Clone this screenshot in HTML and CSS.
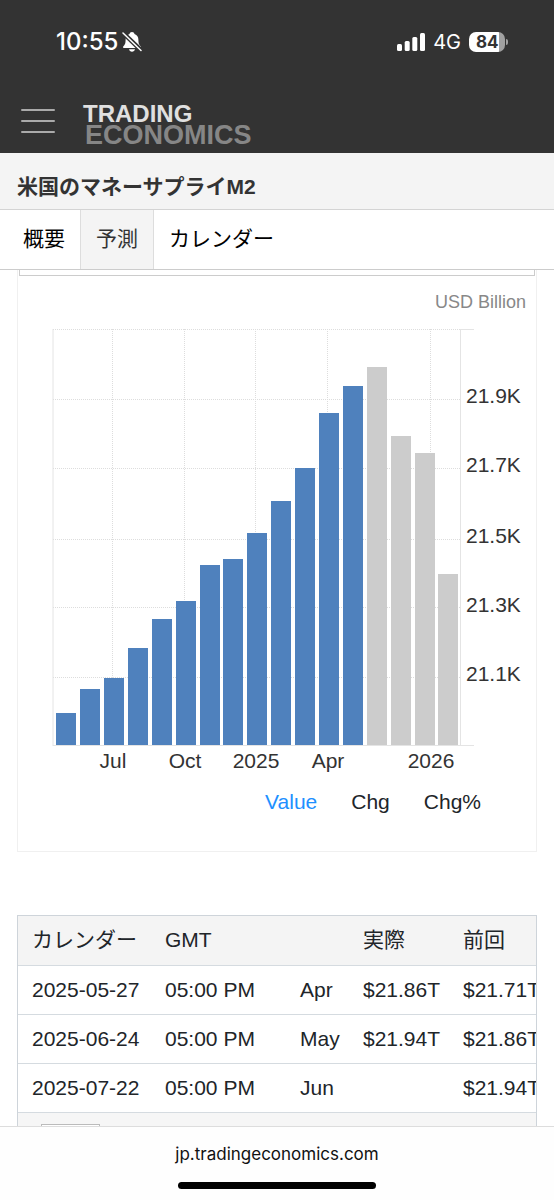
FILE: index.html
```html
<!DOCTYPE html>
<html lang="ja">

<head>
    <meta charset="UTF-8">
    <meta name="viewport" content="width=device-width, initial-scale=1.0">
    <title>米国のマネーサプライM2</title>
    <link rel="stylesheet" href="styles.css">
</head>

<body>
    <header>
        <div class="status">
            <div class="clock">
                <span class="time">10:55</span>
                <svg class="bell" width="20" height="22" viewBox="0 0 20 22">
                    <path fill="#fff" d="M10 1c1.400 0 2.200.8 2.500 2 2.700.9 3.900 3 3.900 5.700 0 4 .8 5 2.200 6.500.7.8.3 1.800-.8 1.800H2.200c-1.100 0-1.500-1-.8-1.800C2.800 13.700 3.600 12.700 3.600 8.700 3.600 6 4.800 3.900 7.500 3 7.800 1.800 8.600 1 10 1zM7 18.300h6c-.3 1.500-1.500 2.500-3 2.500s-2.700-1-3-2.500z" />
                    <path stroke="#333" stroke-width="4.500" d="M0 1l20 19" />
                    <path stroke="#fff" stroke-width="1.500" stroke-linecap="round" d="M1 2l18 17.500" />
                </svg>
            </div>
            <div class="phone">
                <svg width="28" height="20" viewBox="0 0 28 20" fill="#fff">
                    <rect x="0" y="12" width="5" height="7" rx="1.500" />
                    <rect x="7.700" y="9" width="5" height="10" rx="1.500" />
                    <rect x="15.300" y="5" width="5" height="14" rx="1.500" />
                    <rect x="23" y="1" width="5" height="18" rx="1.500" />
                </svg>
                <span class="network">4G</span>
                <div class="battery"><span>84</span></div>
            </div>
        </div>
        <div class="brand">
            <button class="menu" aria-label="Menu"><i></i><i></i><i></i></button>
            <a href="#" class="logo">
                <span class="trading">TRADING</span>
                <span class="economics">ECONOMICS</span>
            </a>
        </div>
    </header>

    <h1>米国のマネーサプライM2</h1>
    <nav>
        <a href="#">概要</a>
        <a href="#" class="active">予測</a>
        <a href="#">カレンダー</a>
    </nav>

    <main>
        <section class="card">
            <div class="toolbar"></div>
            <svg class="chart" viewBox="0 0 518 508">
                <text class="unit" x="508" y="32" text-anchor="end">USD Billion</text>
                <g class="grid">
                    <path d="M35 53.500H442M35 123.500H442M35 192.500H442M35 263.500H442M35 331.500H442M35 401.500H442" />
                    <path d="M94.500 53V469M166.500 53V469M237.500 53V469M309.500 53V469M412.500 53V469" />
                </g>
                <path class="axis" d="M35 53V470M442.500 53V470M35 469.500H456M442 53.500H456" />
                <g class="actual">
                    <rect x="38" y="437" width="20" height="32" />
                    <rect x="62" y="413" width="20" height="56" />
                    <rect x="86" y="402" width="20" height="67" />
                    <rect x="110" y="372" width="20" height="97" />
                    <rect x="134" y="343" width="20" height="126" />
                    <rect x="158" y="325" width="20" height="144" />
                    <rect x="182" y="289" width="20" height="180" />
                    <rect x="205" y="283" width="20" height="186" />
                    <rect x="229" y="257" width="20" height="212" />
                    <rect x="253" y="225" width="20" height="244" />
                    <rect x="277" y="192" width="20" height="277" />
                    <rect x="301" y="137" width="20" height="332" />
                    <rect x="325" y="110" width="20" height="359" />
                </g>
                <g class="forecast">
                    <rect x="349" y="91" width="20" height="378" />
                    <rect x="373" y="160" width="20" height="309" />
                    <rect x="397" y="177" width="20" height="292" />
                    <rect x="420" y="298" width="20" height="171" />
                </g>
                <g class="values">
                    <text x="448" y="127">21.9K</text>
                    <text x="448" y="196">21.7K</text>
                    <text x="448" y="267">21.5K</text>
                    <text x="448" y="336">21.3K</text>
                    <text x="448" y="405">21.1K</text>
                </g>
                <g class="months" text-anchor="middle">
                    <text x="95" y="492">Jul</text>
                    <text x="167" y="492">Oct</text>
                    <text x="238" y="492">2025</text>
                    <text x="310" y="492">Apr</text>
                    <text x="413" y="492">2026</text>
                </g>
            </svg>
            <div class="modes">
                <button class="selected">Value</button>
                <button>Chg</button>
                <button>Chg%</button>
            </div>
        </section>

        <section class="calendar">
            <table>
                <colgroup>
                    <col class="date">
                    <col class="hour">
                    <col class="month">
                    <col class="money">
                    <col class="money">
                </colgroup>
                <thead>
                    <tr>
                        <th>カレンダー</th>
                        <th>GMT</th>
                        <th></th>
                        <th>実際</th>
                        <th>前回</th>
                    </tr>
                </thead>
                <tbody>
                    <tr>
                        <td>2025-05-27</td>
                        <td>05:00 PM</td>
                        <td>Apr</td>
                        <td>$21.86T</td>
                        <td>$21.71T</td>
                    </tr>
                    <tr>
                        <td>2025-06-24</td>
                        <td>05:00 PM</td>
                        <td>May</td>
                        <td>$21.94T</td>
                        <td>$21.86T</td>
                    </tr>
                    <tr>
                        <td>2025-07-22</td>
                        <td>05:00 PM</td>
                        <td>Jun</td>
                        <td></td>
                        <td>$21.94T</td>
                    </tr>
                </tbody>
            </table>
            <div class="more">
                <div class="box"></div>
            </div>
        </section>
    </main>

    <footer>
        <span>jp.tradingeconomics.com</span>
        <div class="home"></div>
    </footer>
</body>

</html>
```
FILE: styles.css
```css
* {
    margin: 0;
    padding: 0;
    box-sizing: border-box;
}

body {
    display: flex;
    flex-direction: column;
    height: 100vh;
    background-color: white;
    color: #212529;
    font-family: "Liberation Sans", "Noto Sans CJK JP", sans-serif;
    font-size: 21px;
}

button {
    border: none;
    background: none;
    font: inherit;
    color: inherit;
}

a {
    text-decoration: none;
    color: inherit;
}

header {
    height: 153px;
    background-color: #333;
    color: white;
    flex-shrink: 0;
}

.status {
    display: flex;
    justify-content: space-between;
    align-items: center;
    height: 83px;
    padding: 0 46px 0 56px;
    font-family: Inter, sans-serif;
}

.clock,
.phone {
    display: flex;
    align-items: center;
}

.clock {
    gap: 4px;
}

.phone {
    gap: 8px;
}

.time {
    font-size: 24px;
    font-weight: 500;
}

.network {
    font-size: 20px;
}

.battery {
    position: relative;
    width: 36px;
    height: 20px;
    border-radius: 7px;
    background: linear-gradient(to right, white 84%, #a0a0a0 84%);
    color: #333;
    font-size: 17px;
    font-weight: 700;
    line-height: 20px;
    padding-left: 7px;
    margin-right: 3px;
}

.battery::after {
    content: "";
    position: absolute;
    right: -3px;
    top: 7px;
    width: 2px;
    height: 6px;
    border-radius: 0 3px 3px 0;
    background-color: #a0a0a0;
}

.brand {
    display: flex;
    align-items: center;
    gap: 28px;
    height: 70px;
    padding: 10px 21px 0;
}

.menu {
    display: flex;
    flex-direction: column;
    gap: 9px;
    width: 34px;
    height: 32px;
    padding-top: 2px;
}

.menu i {
    width: 100%;
    height: 2px;
    flex-shrink: 0;
    border-radius: 1px;
    background-color: #aaa;
}

.logo {
    display: flex;
    flex-direction: column;
    padding-top: 3px;
    font-weight: bold;
}

.trading {
    color: #e0e0e0;
    font-size: 24px;
    line-height: 20px;
}

.economics {
    color: #868686;
    font-size: 27px;
    line-height: 22px;
    padding-left: 2px;
}

h1 {
    height: 57px;
    padding: 12px 17px 0;
    background-color: #f4f4f4;
    border-bottom: 1px solid #d4d4d4;
    color: #333;
    font-size: 21px;
    line-height: 44px;
    flex-shrink: 0;
}

nav {
    display: flex;
    height: 60px;
    padding-left: 8px;
    border-bottom: 1px solid #ccc;
    color: black;
    line-height: 58px;
    flex-shrink: 0;
}

nav a {
    padding: 0 15px;
}

nav .active {
    background-color: #f4f4f4;
    border: solid #ddd;
    border-width: 0 1px;
    color: #333;
}

main {
    flex: 1;
    min-height: 0;
    overflow: hidden;
    padding: 0 17px;
}

.card {
    border: 1px solid #f0f0f0;
    border-top: none;
    padding-bottom: 37px;
    margin-bottom: 63px;
}

.toolbar {
    height: 6px;
    margin: 0 1px;
    border: 1px solid #ccc;
    border-top: none;
}

.chart {
    display: block;
    width: 100%;
}

.chart text {
    fill: #333;
    font-size: 21px;
}

.chart .unit {
    fill: #888;
    font-size: 18px;
}

.grid path {
    fill: none;
    stroke: #ddd;
    stroke-dasharray: 1 1;
}

.axis {
    fill: none;
    stroke: #e4e4e4;
}

.actual {
    fill: #4f81bd;
}

.forecast {
    fill: #ccc;
}

.modes {
    display: flex;
    justify-content: flex-end;
    gap: 34px;
    padding: 6px 55px 0 0;
    line-height: 24px;
}

.modes .selected {
    color: #1e90ff;
}

.calendar {
    border: 1px solid #ced4da;
    overflow: hidden;
}

table {
    width: 100%;
    min-width: 531px;
    table-layout: fixed;
    border-collapse: collapse;
}

.date {
    width: 133px;
}

.hour {
    width: 135px;
}

.month {
    width: 63px;
}

.money {
    width: 100px;
}

th,
td {
    height: 49px;
    padding-left: 14px;
    border-bottom: 1px solid #d5dbe0;
    text-align: left;
    font-weight: normal;
    line-height: 32px;
    white-space: nowrap;
}

thead {
    background-color: #f4f4f4;
}

.more {
    height: 60px;
    padding: 11px 23px;
    background-color: #f6f6f6;
}

.box {
    width: 59px;
    height: 36px;
    border: 1px solid #bbb;
    background-color: white;
}

footer {
    display: flex;
    flex-direction: column;
    align-items: center;
    gap: 16px;
    height: 74px;
    padding-top: 15px;
    border-top: 1px solid #ddd;
    background-color: #fefefe;
    color: #111;
    font-family: Inter, sans-serif;
    font-size: 17px;
    line-height: 24px;
    flex-shrink: 0;
}

.home {
    width: 198px;
    height: 7px;
    border-radius: 4px;
    background-color: black;
}
```
